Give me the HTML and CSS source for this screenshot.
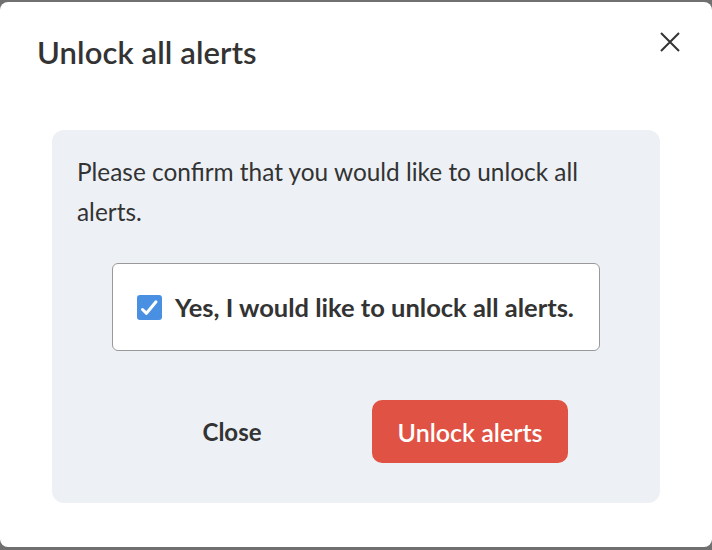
FILE: index.html
```html
<!DOCTYPE html>
<html lang="en">
<head>
<meta charset="utf-8">
<title>Unlock all alerts</title>
<link rel="stylesheet" href="styles.css">
</head>
<body>
<div class="modal">
  <div class="modal-header">
    <h1 class="modal-title">Unlock all alerts</h1>
    <button class="icon-close" aria-label="Close">
      <svg width="20" height="20" viewBox="0 0 20 20"><path d="M1 1 L19 19 M19 1 L1 19" stroke="#333" stroke-width="2" fill="none"/></svg>
    </button>
  </div>
  <div class="panel">
    <p class="message">Please confirm that you would like to unlock all alerts.</p>
    <div class="confirm-row">
      <label class="confirm-box">
        <span class="checkbox">
          <svg width="25" height="25" viewBox="0 0 25 25"><path d="M5.5 14.5 L9.5 18.3 L19 6.8" stroke="#fff" stroke-width="3" fill="none" stroke-linecap="round" stroke-linejoin="round"/></svg>
        </span>
        <span class="confirm-label">Yes, I would like to unlock all alerts.</span>
      </label>
    </div>
    <div class="actions">
      <button class="btn btn-plain">Close</button>
      <button class="btn btn-danger">Unlock alerts</button>
    </div>
  </div>
</div>
</body>
</html>
```

FILE: styles.css
```css
* { box-sizing: border-box; }
html, body { margin: 0; padding: 0; }
body {
  background: #707070;
  font-family: "Lato", "Liberation Sans", sans-serif;
  color: #333;
  padding-top: 2px;
  height: 550px;
  overflow: hidden;
}
.modal {
  background: #fff;
  width: 712px;
  height: 545px;
  border-radius: 8px;
  display: flex;
  flex-direction: column;
}
.modal-header {
  display: flex;
  justify-content: space-between;
  align-items: flex-start;
  padding: 30px 32px 0 37px;
  height: 128px;
}
.modal-title {
  margin: 0;
  font-size: 31px;
  font-weight: 600;
  line-height: 40px;
  color: #333;
  letter-spacing: 0.1px;
}
.icon-close {
  background: none;
  border: 0;
  padding: 0;
  margin-top: 0;
  width: 20px;
  height: 20px;
  cursor: pointer;
}
.icon-close svg { display: block; }
.panel {
  margin: 0 52px;
  background: #edf1f5;
  border-radius: 12px;
  padding: 22px 25px 40px;
}
.message {
  margin: 0;
  font-size: 24.4px;
  line-height: 40px;
  color: #333;
  max-width: 530px;
}
.confirm-row {
  display: flex;
  justify-content: center;
  margin-top: 31px;
}
.confirm-box {
  display: inline-flex;
  align-items: center;
  gap: 13px;
  height: 88px;
  padding: 0 25px 0 24px;
  background: #fff;
  border: 1px solid #999;
  border-radius: 6px;
}
.checkbox {
  width: 25px;
  height: 25px;
  background: #4a90e2;
  border-radius: 3px;
  display: block;
}
.checkbox svg { display: block; }
.confirm-label {
  font-size: 25.5px;
  font-weight: 700;
  color: #333;
}
.actions {
  display: flex;
  justify-content: center;
  gap: 42px;
  margin-top: 49px;
  padding-right: 10px;
}
.btn {
  width: 196px;
  height: 63px;
  border: 0;
  border-radius: 10px;
  font-family: inherit;
  font-size: 24px;
  font-weight: 700;
  cursor: pointer;
}
.btn-plain {
  background: transparent;
  color: #333;
}
.btn-danger {
  background: #e05243;
  color: #fff;
  font-size: 25px;
  font-weight: 600;
}
```
